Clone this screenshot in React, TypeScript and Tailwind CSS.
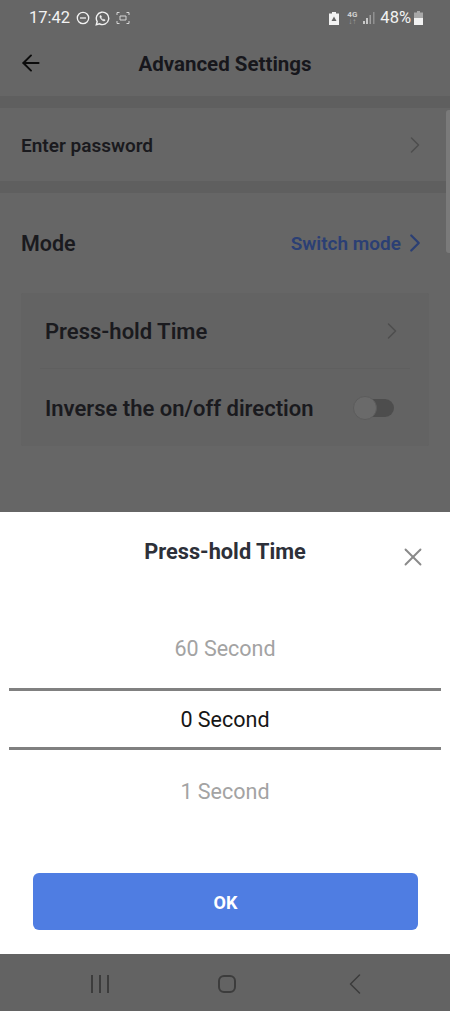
import { ArrowLeft, ChevronLeft, ChevronRight, X } from "lucide-react";

const StatusBar = () => {
  return (
    <div className="flex flex-row items-center justify-between h-[36px] pl-[29px] pr-[27px] text-[#f2f2f2]">
      <div className="flex flex-row items-center">
        <p className="text-[16.5px] leading-none">17:42</p>
        <svg width="14" height="14" viewBox="0 0 14 14" fill="none" stroke="currentColor" strokeWidth="1.3" className="ml-[6px]">
          <circle cx="7" cy="7" r="5.7" />
          <path d="M4 7h6" />
        </svg>
        <svg width="15" height="15" viewBox="0 0 15 15" fill="none" stroke="currentColor" strokeWidth="1.4" className="ml-[5px]">
          <path d="M1.3 13.700l.9-3.200A6.200 6.200 0 1 1 4.600 12.800z" />
          <path d="M5.200 4.600c-.6.600-.5 1.700.4 3s2.200 2.300 3.300 2.400c.7 0 1.200-.5 1.300-1.100l-1.500-.8-.6.600c-.9-.4-1.500-1-2-2l.6-.6-.7-1.600z" fill="currentColor" strokeWidth="0.4" />
        </svg>
        <svg width="14" height="14" viewBox="0 0 14 14" fill="none" stroke="currentColor" strokeWidth="1" className="ml-[6px] opacity-80">
          <path d="M1 4V1.500h2.500M10.500 1.500H13V4M13 10v2.500h-2.500M3.500 12.500H1V10" />
          <path d="M4 5h6v4H4z" />
        </svg>
      </div>
      <div className="flex flex-row items-center">
        <svg width="10" height="13" viewBox="0 0 10 13" className="fill-[#f2f2f2]">
          <path d="M3 0h4v1.500h3V13H0V1.500h3z" />
          <path d="M5 4.500 7.500 9h-5z" fill="#666666" />
        </svg>
        <div className="flex flex-col items-center ml-[8px] text-[8px] leading-[7px] font-bold text-[#d0d0d0]">
          <span>4G</span>
          <span className="text-[#a0a0a0]">↓↑</span>
        </div>
        <svg width="12" height="14" viewBox="0 0 12 14" className="ml-[6px] fill-[#c8c8c8]">
          <rect x="0" y="10" width="2" height="3" />
          <rect x="3" y="7" width="2" height="6" />
          <rect x="6.500" y="4" width="1.500" height="9" fill="#a0a0a0" />
          <rect x="10" y="1" width="1.500" height="12" fill="#909090" />
        </svg>
        <p className="ml-[5px] text-[16.5px] leading-none">48%</p>
        <svg width="9" height="14" viewBox="0 0 9 14" className="ml-[3px]">
          <path d="M3 0h3v1.500h3V14H0V1.500h3z" fill="#a8a8a8" />
          <rect x="0" y="7" width="9" height="7" fill="#f2f2f2" />
        </svg>
      </div>
    </div>
  );
};

const App = () => {
  return (
    <div className="flex flex-col w-[450px] h-[1011px] overflow-hidden bg-[#666666] font-['Roboto',sans-serif]">
      <div className="relative flex flex-col h-[512px]">
        <StatusBar />

        <div className="relative flex flex-row justify-center items-center h-[60px] pb-[3px]">
          <ArrowLeft size={26} strokeWidth={1.8} className="absolute left-[18px] top-[14px] text-[#0c0c0c]" />
          <p className="text-[20.5px] font-bold text-[#17171c]">Advanced Settings</p>
        </div>

        <div className="h-[12px] bg-[#5f5f5f]"></div>

        <div className="flex flex-row justify-between items-center h-[73px] pl-[21px] pr-[21px]">
          <p className="text-[19px] font-semibold text-[#1a1a1e] pt-[3px]">Enter password</p>
          <ChevronRight size={28} strokeWidth={1.3} className="text-[#4e4e4e]" />
        </div>

        <div className="h-[12px] bg-[#5f5f5f]"></div>

        <div className="flex flex-row justify-between items-center h-[100px] pl-[21px] pr-[20px]">
          <p className="text-[21.5px] font-semibold text-[#1a1a1e] pt-[3px]">Mode</p>
          <div className="flex flex-row items-center">
            <p className="text-[19px] font-semibold text-[#2b3f74] pt-[2px]">Switch mode</p>
            <ChevronRight size={30} strokeWidth={1.8} className="-ml-[1px] text-[#2b3f74]" />
          </div>
        </div>

        <div className="flex flex-col mx-[21px] h-[153px] bg-[#636363] rounded-[2px] px-[19px]">
          <div className="flex flex-row justify-between items-center h-[76px] pl-[5px] pr-[4px] border-b border-[#5f5f5f]">
            <p className="text-[22px] font-semibold text-[#1a1a1e] pt-[2px]">Press-hold Time</p>
            <ChevronRight size={28} strokeWidth={1.3} className="text-[#4e4e4e]" />
          </div>
          <div className="flex flex-row justify-between items-center h-[77px] pl-[5px] pr-[16px]">
            <p className="text-[22px] font-semibold text-[#1a1a1e] pt-[2px]">Inverse the on/off direction</p>
            <div className="relative w-[40px] h-[18px] mt-[1px] rounded-full bg-[#4d4d4d]">
              <div className="absolute -left-[1px] -top-[3px] w-[24px] h-[24px] rounded-full bg-[#6a6a6a] border border-[#5c5c5c]"></div>
            </div>
          </div>
        </div>

        <div className="absolute right-0 top-[110px] w-[4px] h-[143px] rounded-l-[3px] bg-[#7a7a7a]"></div>
      </div>

      <div className="flex flex-col h-[442px] bg-white">
        <div className="relative flex justify-center h-[77px] pt-[25px]">
          <p className="text-[21.75px] leading-[30px] font-bold text-[#2d3039]">Press-hold Time</p>
          <X size={30} strokeWidth={1.5} className="absolute left-[398px] top-[30px] text-[#8a8a8a]" />
        </div>

        <div className="flex flex-col items-center mx-[9px] mt-[27px] text-[21.5px]">
          <p className="h-[72px] leading-[65px] text-[#a3a3a3]">60 Second</p>
          <p className="flex items-center justify-center w-full h-[62px] pt-[3px] border-y-[3px] border-[#808080] text-[#161616]">0 Second</p>
          <p className="h-[72px] leading-[83px] text-[#a3a3a3]">1 Second</p>
        </div>

        <button className="ml-[33px] mr-[32px] mt-[51px] h-[57px] pt-[1px] rounded-[6px] bg-[#4f7de2] text-[18px] font-bold text-white">
          OK
        </button>
      </div>

      <div className="flex flex-row flex-1 bg-[#636363] items-center pt-[3px]">
        <div className="flex flex-row justify-center gap-[6px] w-[200px]">
          <div className="w-[2px] h-[18px] bg-[#3c3c3c]"></div>
          <div className="w-[2px] h-[18px] bg-[#3c3c3c]"></div>
          <div className="w-[2px] h-[18px] bg-[#3c3c3c]"></div>
        </div>
        <div className="w-[18px] h-[18px] ml-[18px] rounded-[6px] border-2 border-[#3c3c3c]"></div>
        <ChevronLeft size={36} strokeWidth={1} className="ml-[101px] text-[#3c3c3c]" />
      </div>
    </div>
  );
};

export default App;
